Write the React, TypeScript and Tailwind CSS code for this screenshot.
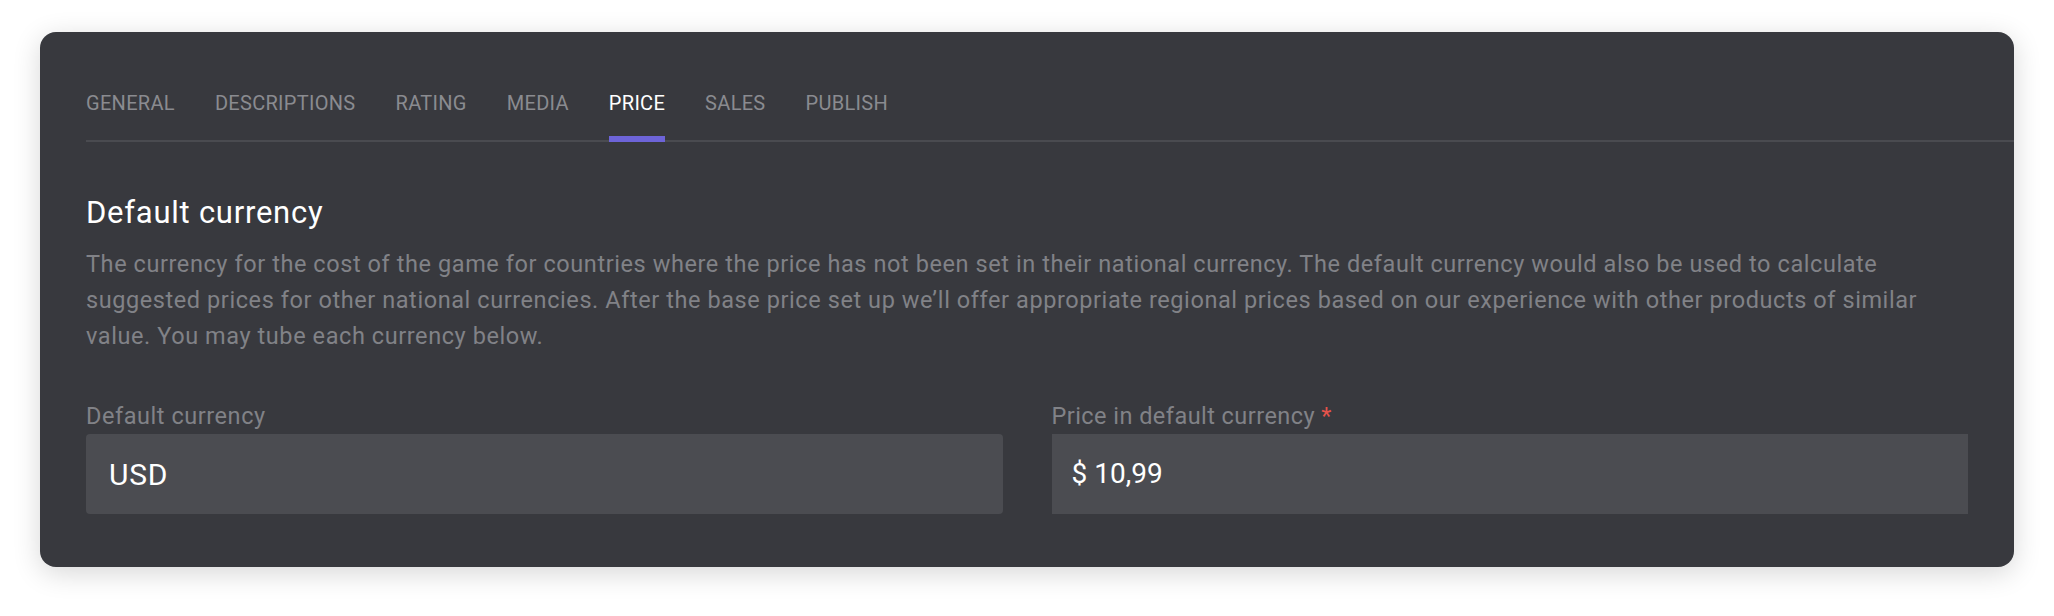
import React, { useState } from "react";

const tabs = ["General", "Descriptions", "Rating", "Media", "Price", "Sales", "Publish"];

export default function App() {
  const [active, setActive] = useState("Price");

  return (
    <div className="min-h-screen bg-white px-[40px] pt-[32px] font-['Roboto',sans-serif]">
      <div className="rounded-2xl bg-[#38393e] pb-[53px] pl-[46px] shadow-[0_6px_28px_rgba(0,0,0,0.16)]">
        <nav className="flex gap-10 border-b-2 border-[#4a4b50] pt-[59px]">
          {tabs.map((tab) => (
            <button
              key={tab}
              type="button"
              onClick={() => setActive(tab)}
              className={`relative pb-[25px] text-[20px] leading-[24px] tracking-[0.3px] uppercase ${
                active === tab ? "text-white" : "text-[#8a8b90] hover:text-gray-300"
              }`}
            >
              {tab}
              {active === tab && (
                <span className="absolute right-0 bottom-[-2px] left-0 h-[6px] bg-[#6d64d8]" />
              )}
            </button>
          ))}
        </nav>

        <div className="pr-[46px]">
          <h2 className="mt-[53px] text-[31px] leading-[36px] tracking-[0.75px] text-white">Default currency</h2>
          <p className="mt-[15px] text-[23.5px] leading-[36px] tracking-[0.58px] text-[#818287]">
            The currency for the cost of the game for countries where the price has not been set in their national
            currency. The default currency would also be used to calculate suggested prices for other national
            currencies. After the base price set up we’ll offer appropriate regional prices based on our experience
            with other products of similar value. You may tube each currency below.
          </p>

          <div className="mt-12 grid grid-cols-2 gap-x-[49px]">
            <div>
              <label className="block text-[23.5px] leading-[28px] tracking-[0.55px] text-[#818287]">
                Default currency
              </label>
              <div className="mt-1 flex h-[80px] items-center rounded bg-[#4b4c51] px-[23px] text-[30px] tracking-[0.7px] text-white">
                USD
              </div>
            </div>
            <div>
              <label className="block text-[23.5px] leading-[28px] tracking-[0.45px] text-[#818287]">
                Price in default currency <span className="text-[#e5534b]">*</span>
              </label>
              <div className="mt-1 flex h-[80px] items-center bg-[#4b4c51] px-[20px] text-[28px] text-white">
                $ 10,99
              </div>
            </div>
          </div>
        </div>
      </div>
    </div>
  );
}
